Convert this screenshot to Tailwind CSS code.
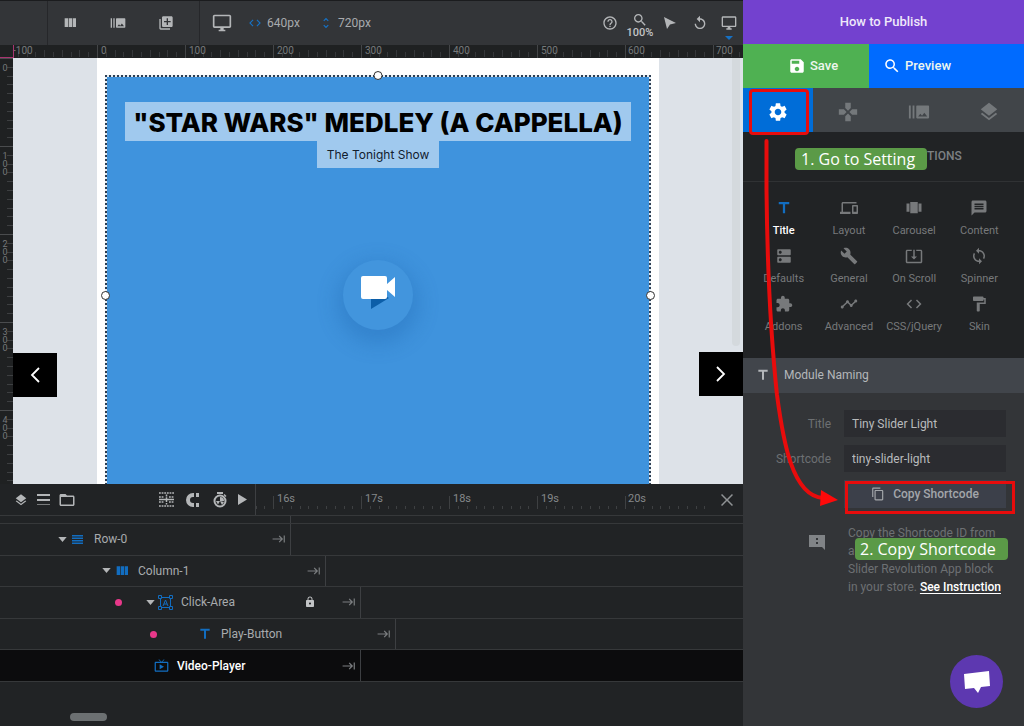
<!DOCTYPE html>
<html lang="en">
<head>
<meta charset="utf-8">
<title>Slider Editor</title>
<script src="https://cdn.jsdelivr.net/npm/@tailwindcss/browser@4"></script>
</head>
<body class="flex min-h-screen bg-[#212325] font-['Roboto',sans-serif] text-[#a8abae]">
<svg class="hidden" aria-hidden="true">
  <symbol id="burst" viewBox="0 0 24 24"><path d="M1 5h2v14H1zm4 0h2v14H5zm17 0H10c-.55 0-1 .45-1 1v12c0 .55.45 1 1 1h12c.55 0 1-.45 1-1V6c0-.55-.45-1-1-1zM11 17l2.500-3.150L15.290 16l2.500-3.220L21 17H11z"/></symbol>
  <symbol id="layers" viewBox="0 0 24 24"><path d="M11.990 18.540l-7.370-5.730L3 14.070l9 7 9-7-1.630-1.270-7.380 5.740zM12 16l7.360-5.730L21 9l-9-7-9 7 1.630 1.270L12 16z"/></symbol>
  <symbol id="search" viewBox="0 0 24 24"><path d="M15.500 14h-.79l-.28-.27C15.410 12.590 16 11.110 16 9.500 16 5.910 13.090 3 9.500 3S3 5.910 3 9.500 5.910 16 9.500 16c1.610 0 3.090-.59 4.230-1.570l.27.28v.79l5 4.990L20.490 19l-4.990-5zm-6 0C7.010 14 5 11.990 5 9.500S7.010 5 9.500 5 14 7.010 14 9.500 11.990 14 9.500 14z"/></symbol>
  <symbol id="title" viewBox="0 0 24 24"><path d="M5 4v3h5.500v12h3V7H19V4z"/></symbol>
  <symbol id="code" viewBox="0 0 24 24"><path d="M9.400 16.600L4.800 12l4.600-4.600L8 6l-6 6 6 6 1.400-1.400zm5.200 0l4.600-4.600-4.600-4.600L16 6l6 6-6 6-1.400-1.400z"/></symbol>
  <symbol id="desktop" viewBox="0 0 24 24"><path d="M21 2H3c-1.100 0-2 .9-2 2v12c0 1.100.9 2 2 2h7v2H8v2h8v-2h-2v-2h7c1.100 0 2-.9 2-2V4c0-1.100-.9-2-2-2zm0 14H3V4h18v12z"/></symbol>
  <symbol id="column" viewBox="0 0 24 24"><path d="M10 18h5V5h-5v13zm-6 0h5V5H4v13zM16 5v13h5V5h-5z"/></symbol>
  <symbol id="tab" viewBox="0 0 24 24"><path d="M11.590 7.410L15.170 11H1v2h14.170l-3.590 3.590L13 18l6-6-6-6-1.410 1.410zM20 6v12h2V6h-2z"/></symbol>
  <symbol id="caret" viewBox="0 0 10 6"><path d="M0 0h10L5 6z"/></symbol>
</svg>

<main class="flex min-w-0 flex-1 flex-col">
  <!-- top toolbar -->
  <header class="flex h-[45px] items-stretch border-t border-[#1b1c1e] bg-[#333538] fill-[#b4b6b8]">
    <div class="w-12 border-r border-[#26272a]"></div>
    <div class="flex w-[152px] items-center gap-6 border-r border-[#26272a] pl-[10px]">
      <button aria-label="Columns" class="grid w-6 place-items-center"><svg class="size-4"><use href="#column"/></svg></button>
      <button aria-label="Slides" class="grid w-6 place-items-center"><svg class="size-4"><use href="#burst"/></svg></button>
      <button aria-label="Add slide" class="grid w-6 place-items-center"><svg class="size-4" viewBox="0 0 24 24"><path d="M4 6H2v14c0 1.100.9 2 2 2h14v-2H4V6zm16-4H8c-1.100 0-2 .9-2 2v12c0 1.100.9 2 2 2h12c1.100 0 2-.9 2-2V4c0-1.100-.9-2-2-2zm-1 9h-4v4h-2v-4H9V9h4V5h2v4h4v2z"/></svg></button>
    </div>
    <div class="flex items-center pl-3 text-xs">
      <button aria-label="Device"><svg class="size-5"><use href="#desktop"/></svg></button>
      <svg class="ml-4 size-[14px] fill-[#1671c4]"><use href="#code"/></svg>
      <span class="ml-[5px] w-[52px]">640px</span>
      <svg class="size-[14px] fill-[#1671c4]" viewBox="0 0 24 24"><path d="M12 5.830L15.170 9l1.410-1.410L12 3 7.410 7.590 8.830 9 12 5.830zm0 12.340L8.830 15l-1.410 1.410L12 21l4.590-4.590L15.170 15 12 18.170z"/></svg>
      <span class="ml-[5px]">720px</span>
    </div>
    <div class="ml-auto flex items-center">
      <button aria-label="Help" class="grid w-[30px] place-items-center"><svg class="size-4" viewBox="0 0 24 24"><path d="M11 18h2v-2h-2v2zm1-16C6.480 2 2 6.480 2 12s4.480 10 10 10 10-4.480 10-10S17.520 2 12 2zm0 18c-4.410 0-8-3.590-8-8s3.590-8 8-8 8 3.590 8 8-3.590 8-8 8zm0-14c-2.210 0-4 1.790-4 4h2c0-1.100.9-2 2-2s2 .9 2 2c0 2-3 1.750-3 5h2c0-2.250 3-2.500 3-5 0-2.210-1.790-4-4-4z"/></svg></button>
      <button class="flex w-[30px] flex-col items-center pt-1 text-[11px] leading-[10px] font-medium text-[#c2c4c6]"><svg class="size-4"><use href="#search"/></svg>100%</button>
      <button aria-label="Select" class="grid w-[30px] place-items-center"><svg class="size-4" viewBox="0 0 16 16"><path d="M2 2l12 6-6 1.500L5 14z"/></svg></button>
      <button aria-label="Undo" class="grid w-[29px] place-items-center"><svg class="size-4" viewBox="0 0 24 24"><path d="M12 5V1L7 6l5 5V7c3.310 0 6 2.690 6 6s-2.690 6-6 6-6-2.690-6-6H4c0 4.420 3.580 8 8 8s8-3.580 8-8-3.580-8-8-8z"/></svg></button>
      <button aria-label="Desktop view" class="flex w-[29px] flex-col items-center gap-[5px] pt-[9px]"><svg class="size-4"><use href="#desktop"/></svg><svg class="h-1 w-2 fill-[#1671c4]" viewBox="0 0 8 4"><path d="M0 0h8L4 4z"/></svg></button>
    </div>
  </header>

  <!-- horizontal ruler -->
  <svg class="h-[13px] w-full bg-[#1f2122] text-[10px]">
    <defs><pattern id="hticks" x="9" width="88" height="13" patternUnits="userSpaceOnUse"><path d="M.5 0v13" stroke="#434547"/><path d="M9.500 7v5M18.500 5v7M26.500 7v5M35.500 5v7M44.500 7v5M53.500 5v7M62.500 7v5M70.500 5v7M79.500 7v5" stroke="#35373a"/></pattern></defs>
    <rect width="100%" height="13" fill="url(#hticks)"/>
    <path d="M0 0h13v13H0z" fill="#1f2122"/>
    <g fill="#76797b"><text x="13" y="9">-100</text><text x="101" y="9">0</text><text x="189" y="9">100</text><text x="277" y="9">200</text><text x="365" y="9">300</text><text x="453" y="9">400</text><text x="541" y="9">500</text><text x="628" y="9">600</text><text x="716" y="9">700</text></g>
    <path d="M13.500 0v13M0 12.500h13" stroke="#a83470"/>
  </svg>

  <div class="flex flex-1">
    <!-- vertical ruler -->
    <svg class="h-auto w-[13px] shrink-0 bg-[#1f2122] text-[9px]">
      <defs><pattern id="vticks" width="13" height="88" patternUnits="userSpaceOnUse"><path d="M0 .5h13" stroke="#4a4c4e"/><path d="M7 9.500h6M7 18.500h6M7 26.500h6M7 35.500h6M7 44.500h6M7 53.500h6M7 62.500h6M7 70.500h6M7 79.500h6" stroke="#3d3f41"/></pattern></defs>
      <rect width="13" height="100%" fill="url(#vticks)"/>
      <g fill="#76797b" text-anchor="middle"><text x="5" y="13">0</text>
      <text y="101"><tspan x="5">1</tspan><tspan x="5" dy="8">0</tspan><tspan x="5" dy="8">0</tspan></text>
      <text y="189"><tspan x="5">2</tspan><tspan x="5" dy="8">0</tspan><tspan x="5" dy="8">0</tspan></text>
      <text y="277"><tspan x="5">3</tspan><tspan x="5" dy="8">0</tspan><tspan x="5" dy="8">0</tspan></text>
      <text y="365"><tspan x="5">4</tspan><tspan x="5" dy="8">0</tspan><tspan x="5" dy="8">0</tspan></text></g>
    </svg>

    <!-- stage -->
    <div class="relative flex flex-1 justify-center bg-[#dde2e8] px-[84px]">
      <section class="flex flex-1 bg-white px-2 pt-[17px]">
        <div class="relative flex flex-1 flex-col items-center bg-[#3f93dd] pt-[27px]">
          <svg class="absolute inset-0 h-full w-full" fill="none" aria-hidden="true"><path d="M0 1h546M1 0v500M545 0v500" stroke="#e4ecf4" stroke-width="2"/><path d="M0 1h546M1 0v500M545 0v500" stroke="#2c3e52" stroke-width="2" stroke-dasharray="2 2"/></svg>
          <h1 class="bg-[#a0c9ee] px-2 pt-[3px] font-['Inter',sans-serif] text-[26px] leading-9 font-extrabold whitespace-nowrap text-black">"STAR WARS" MEDLEY (A CAPPELLA)</h1>
          <p class="bg-[#a0c9ee] px-[10px] pt-px font-['Inter',sans-serif] text-xs leading-[26px] text-[#12202e]">The Tonight Show</p>
          <div class="mt-[92px] grid size-[70px] place-items-center rounded-full bg-[#4295dd] shadow-[0_8px_20px_6px_rgba(25,95,170,0.3)]">
            <svg class="h-9 w-10 -translate-y-[2px]" viewBox="0 0 40 36"><path d="M13 13v21l18-11z" fill="#0c5ea8"/><path d="M5 1h22q2 0 2 2v6l8-7v20l-8-7v7q0 2-2 2H5q-2 0-2-2V3q0-2 2-2z" fill="#fff"/></svg>
          </div>
          <i class="absolute -top-1 left-1/2 size-[9px] -translate-x-1/2 rounded-full border border-[#333] bg-white"></i>
          <i class="absolute top-[216px] -left-1 size-[9px] rounded-full border border-[#333] bg-white"></i>
          <i class="absolute top-[216px] -right-1 size-[9px] rounded-full border border-[#333] bg-white"></i>
        </div>
      </section>
      <i class="absolute top-0 right-[3px] h-[288px] w-2 rounded-b bg-[#d4d9dd]"></i>
      <button aria-label="Previous" class="absolute top-[295px] left-0 grid size-11 place-items-center bg-black"><svg class="h-4 w-[10px]" viewBox="0 0 10 16" fill="none" stroke="#fff" stroke-width="1.800"><path d="M9 1L2 8l7 7"/></svg></button>
      <button aria-label="Next" class="absolute top-[294px] right-0 grid size-11 place-items-center bg-black"><svg class="h-4 w-[10px]" viewBox="0 0 10 16" fill="none" stroke="#fff" stroke-width="1.800"><path d="M1 1l7 7-7 7"/></svg></button>
    </div>
  </div>

  <!-- timeline -->
  <section class="flex h-[242px] flex-col bg-[#212325]">
    <div class="flex h-8 shrink-0 items-stretch border-b border-[#36383a]">
      <div class="flex w-64 items-center border-r border-[#3d3f42] fill-[#b4b6b8] pr-2 pl-[14px]">
        <button aria-label="Layers"><svg class="size-[14px]"><use href="#layers"/></svg></button>
        <button aria-label="List" class="ml-[9px]"><svg class="h-3 w-[13px]" viewBox="0 0 13 12"><path d="M0 0h13v2H0zM0 5h13v2H0z"/><path d="M0 10h13v1H0z" opacity=".6"/></svg></button>
        <button aria-label="Folder" class="ml-2"><svg class="size-[18px]" viewBox="0 0 24 24"><path d="M20 6h-8l-2-2H4c-1.100 0-1.990.9-1.990 2L2 18c0 1.100.9 2 2 2h16c1.100 0 2-.9 2-2V8c0-1.100-.9-2-2-2zm0 12H4V8h16v10z"/></svg></button>
        <button aria-label="Grid" class="ml-auto"><svg class="size-[15px]" viewBox="0 0 15 15" fill="none" stroke="#b4b6b8" stroke-width="1.500"><path d="M0 1h15M0 14h15" stroke-dasharray="1.800 .84"/><path d="M0 5h5M10 5h5M0 10h5M10 10h5" stroke-dasharray="1.800 .84"/><path d="M0 7.500h5M10 7.500h5M5 7.500h5"/><path d="M7.500 2.500v10" stroke-dasharray="2 .8"/></svg></button>
        <button aria-label="Magnet" class="ml-3"><svg class="size-[14px]" viewBox="0 0 14 14"><path d="M8 0H7a7 7 0 000 14h1v-4H7a3 3 0 010-6h1zM10 0h3v4h-3zM10 10h3v4h-3z"/></svg></button>
        <button aria-label="Timer" class="ml-3"><svg class="size-4" viewBox="0 0 16 16"><path d="M5 0h6v2H5zM12.500 2l2 2-1 1-2-2z"/><circle cx="8" cy="9" r="5.500" fill="none" stroke="#b4b6b8" stroke-width="2"/><path d="M8 9V5a4 4 0 014 4zM8 9H4l2 3.500zM8 9l4 1-2 3z"/></svg></button>
        <button aria-label="Play" class="ml-[10px]"><svg class="h-[11px] w-[9px]" viewBox="0 0 9 11"><path d="M0 0l9 5.500L0 11z"/></svg></button>
      </div>
      <svg class="h-[31px] min-w-0 flex-1 text-[11px]">
        <defs><pattern id="tticks" x="17" width="88" height="31" patternUnits="userSpaceOnUse"><path d="M.5 12v13M9.500 22v3M18.500 22v3M27.500 22v3M35.500 22v3M44.500 22v3M53.500 22v3M62.500 22v3M71.500 22v3M79.500 22v3" stroke="#3e4042"/></pattern></defs>
        <rect width="450" height="31" fill="url(#tticks)"/>
        <g fill="#85888a"><text x="21" y="18">16s</text><text x="109" y="18">17s</text><text x="197" y="18">18s</text><text x="285" y="18">19s</text><text x="372" y="18">20s</text></g>
      </svg>
      <button aria-label="Close timeline" class="pr-[7px]"><svg class="size-[18px] fill-[#8f9294]" viewBox="0 0 24 24"><path d="M20 5.400L18.600 4 12 10.600 5.400 4 4 5.400 10.600 12 4 18.600 5.400 20 12 13.400 18.600 20 20 18.600 13.400 12z"/></svg></button>
    </div>
    <div class="h-2 shrink-0 border-b border-[#36383a]"><div class="h-full w-[291px] border-r border-[#3d3f42]"></div></div>
    <div class="flex h-[158px] shrink-0 flex-col text-xs">
      <div class="flex flex-1 border-b border-[#36383a]"><div class="flex w-[291px] items-center border-r border-[#3d3f42] pr-1 pl-[58px]">
        <svg class="h-[5px] w-[9px] fill-[#b4b6b8]"><use href="#caret"/></svg>
        <svg class="ml-[5px] h-[9px] w-[11px] fill-[#126dc0]" viewBox="0 0 11 9"><path d="M0 0h11v1.500H0zM0 2.500h11V4H0zM0 5h11v1.500H0zM0 7.500h11V9H0z"/></svg>
        <span class="ml-[11px]">Row-0</span><svg class="ml-auto size-[14px] fill-[#7c7f81]"><use href="#tab"/></svg></div></div>
      <div class="flex flex-1 border-b border-[#36383a]"><div class="flex w-[326px] items-center border-r border-[#3d3f42] pr-1 pl-[102px]">
        <svg class="h-[5px] w-[9px] fill-[#b4b6b8]"><use href="#caret"/></svg>
        <svg class="ml-[3px] size-4 fill-[#126dc0]"><use href="#column"/></svg>
        <span class="ml-2">Column-1</span><svg class="ml-auto size-[14px] fill-[#7c7f81]"><use href="#tab"/></svg></div></div>
      <div class="flex flex-1 border-b border-[#36383a]"><div class="flex w-[361px] items-center border-r border-[#3d3f42] pr-1 pl-[115px]">
        <i class="size-[7px] rounded-full bg-[#e8388a]"></i>
        <svg class="ml-6 h-[5px] w-[9px] fill-[#b4b6b8]"><use href="#caret"/></svg>
        <svg class="ml-[3px] size-[15px]" viewBox="0 0 15 15" fill="none" stroke="#126dc0"><path d="M2.500 2.500h10v10h-10zM5 11l2.500-6L10 11M6 9h3"/><path d="M.5 .5h3v3h-3zM11.500 .5h3v3h-3zM.5 11.500h3v3h-3zM11.500 11.500h3v3h-3z" fill="#212325"/></svg>
        <span class="ml-2">Click-Area</span>
        <svg class="ml-auto size-3 fill-[#c2c4c6]" viewBox="0 0 24 24"><path d="M18 8h-1V6c0-2.760-2.240-5-5-5S7 3.240 7 6v2H6c-1.100 0-2 .9-2 2v10c0 1.100.9 2 2 2h12c1.100 0 2-.9 2-2V10c0-1.100-.9-2-2-2zm-6 9c-1.100 0-2-.9-2-2s.9-2 2-2 2 .9 2 2-.9 2-2 2zm3.100-9H8.900V6c0-1.710 1.390-3.100 3.100-3.100 1.710 0 3.100 1.390 3.100 3.100v2z"/></svg>
        <svg class="ml-[26px] size-[14px] fill-[#7c7f81]"><use href="#tab"/></svg></div></div>
      <div class="flex flex-1 border-b border-[#36383a]"><div class="flex w-[396px] items-center border-r border-[#3d3f42] pr-1 pl-[150px]">
        <i class="size-[7px] rounded-full bg-[#e8388a]"></i>
        <svg class="ml-10 size-4 fill-[#126dc0]"><use href="#title"/></svg>
        <span class="ml-2">Play-Button</span><svg class="ml-auto size-[14px] fill-[#7c7f81]"><use href="#tab"/></svg></div></div>
      <div class="flex flex-1 border-b border-[#36383a] bg-[#0c0c0d]"><div class="flex w-[361px] items-center border-r border-[#3d3f42] pr-1 pl-[154px]">
        <svg class="size-[15px] fill-[#126dc0]" viewBox="0 0 24 24"><path d="M21 6h-7.590l3.290-3.290L16 2l-4 4-4-4-.71.71L10.590 6H3c-1.100 0-2 .89-2 2v12c0 1.100.9 2 2 2h18c1.100 0 2-.9 2-2V8c0-1.110-.9-2-2-2zm0 14H3V8h18v12zM9 10v8l7-4z"/></svg>
        <span class="ml-2 font-medium text-white">Video-Player</span><svg class="ml-auto size-[14px] fill-[#7c7f81]"><use href="#tab"/></svg></div></div>
    </div>
    <div class="mt-auto mb-[5px] ml-[70px] h-2 w-[37px] rounded-full bg-[#6c7072]"></div>
  </section>
</main>

<!-- settings sidebar -->
<aside class="relative flex w-[281px] shrink-0 flex-col bg-[#333538]">
  <button class="h-11 bg-[#7341cf] text-[13px] font-medium text-[#eee8fa]">How to Publish</button>
  <div class="flex h-11 text-[13px] font-medium text-[#eef6ee]">
    <button class="flex w-[126px] items-center gap-1 bg-[#4fb152] pl-[45px]"><svg class="size-[18px] fill-white" viewBox="0 0 24 24"><path d="M17 3H5c-1.110 0-2 .9-2 2v14c0 1.100.89 2 2 2h14c1.100 0 2-.9 2-2V7l-4-4zm-5 16c-1.660 0-3-1.340-3-3s1.340-3 3-3 3 1.340 3 3-1.340 3-3 3zm3-10H5V5h10v4z"/></svg>Save</button>
    <button class="flex flex-1 items-center gap-1 bg-[#006bff] pl-[14px]"><svg class="size-[18px] fill-white"><use href="#search"/></svg>Preview</button>
  </div>
  <nav class="grid h-11 grid-cols-4 bg-[#414549] fill-[#74787b]">
    <button aria-label="Settings" class="grid place-items-center bg-[#006dd8] fill-white pt-1"><svg class="size-[22px]" viewBox="0 0 24 24"><path d="M19.140 12.940c.04-.3.06-.61.06-.94 0-.32-.02-.64-.07-.94l2.030-1.580c.18-.14.23-.41.12-.61l-1.920-3.320c-.12-.22-.37-.29-.59-.22l-2.390.96c-.5-.38-1.030-.7-1.620-.94l-.36-2.540c-.04-.24-.24-.41-.48-.41h-3.840c-.24 0-.43.17-.47.41l-.36 2.540c-.59.24-1.130.57-1.620.94l-2.390-.96c-.22-.08-.47 0-.59.22L2.740 8.870c-.12.21-.08.47.12.61l2.030 1.580c-.05.3-.09.63-.09.94s.02.64.07.94l-2.030 1.580c-.18.14-.23.41-.12.61l1.920 3.320c.12.22.37.29.59.22l2.390-.96c.5.38 1.030.7 1.620.94l.36 2.540c.05.24.24.41.48.41h3.840c.24 0 .44-.17.47-.41l.36-2.540c.59-.24 1.130-.56 1.620-.94l2.390.96c.22.08.47 0 .59-.22l1.920-3.320c.12-.22.07-.47-.12-.61l-2.010-1.580zM12 15.600c-1.980 0-3.600-1.620-3.600-3.600s1.620-3.600 3.600-3.600 3.600 1.620 3.600 3.600-1.620 3.600-3.600 3.600z"/></svg></button>
    <button aria-label="Navigation" class="grid place-items-center pt-1"><svg class="size-[22px]" viewBox="0 0 24 24"><path d="M15 7.500V2H9v5.500l3 3 3-3zM7.500 9H2v6h5.500l3-3-3-3zM9 16.500V22h6v-5.500l-3-3-3 3zM16.500 9l-3 3 3 3H22V9h-5.500z"/></svg></button>
    <button aria-label="Slides" class="grid place-items-center pt-1"><svg class="size-[22px]"><use href="#burst"/></svg></button>
    <button aria-label="Layers" class="grid place-items-center pt-1"><svg class="size-[22px]"><use href="#layers"/></svg></button>
  </nav>
  <h2 class="h-[50px] border-b border-[#303234] bg-[#212325] text-center text-xs leading-[48px] font-medium text-[#7d8083]">MODULE GENERAL OPTIONS</h2>
  <div class="grid h-44 auto-rows-max grid-cols-4 bg-[#212325] fill-[#77797b] pt-[17px] pr-3 pl-2 text-[11px] leading-4 text-[#77797b]">
    <button class="flex h-12 flex-col items-center gap-[6px] fill-[#126dc0] font-medium text-white"><svg class="size-[18px]"><use href="#title"/></svg>Title</button>
    <button class="flex h-12 flex-col items-center gap-[6px]"><svg class="size-[18px]" viewBox="0 0 24 24"><path d="M4 6h18V4H4c-1.100 0-2 .9-2 2v11H0v3h14v-3H4V6zm19 2h-6c-.55 0-1 .45-1 1v10c0 .55.45 1 1 1h6c.55 0 1-.45 1-1V9c0-.55-.45-1-1-1zm-1 9h-4v-7h4v7z"/></svg>Layout</button>
    <button class="flex h-12 flex-col items-center gap-[6px]"><svg class="size-[18px]" viewBox="0 0 24 24"><path d="M7 19h10V4H7v15zM2 17h4V6H2v11zM18 6v11h4V6h-4z"/></svg>Carousel</button>
    <button class="flex h-12 flex-col items-center gap-[6px]"><svg class="size-[18px]" viewBox="0 0 24 24"><path d="M20 2H4c-1.100 0-1.990.9-1.990 2L2 22l4-4h14c1.100 0 2-.9 2-2V4c0-1.100-.9-2-2-2zm-2 12H6v-2h12v2zm0-3H6V9h12v2zm0-3H6V6h12v2z"/></svg>Content</button>
    <button class="flex h-12 flex-col items-center gap-[6px]"><svg class="size-[18px]" viewBox="0 0 24 24"><path d="M20 13H4c-.55 0-1 .45-1 1v6c0 .55.45 1 1 1h16c.55 0 1-.45 1-1v-6c0-.55-.45-1-1-1zM7 19c-1.100 0-2-.9-2-2s.9-2 2-2 2 .9 2 2-.9 2-2 2zM20 3H4c-.55 0-1 .45-1 1v6c0 .55.45 1 1 1h16c.55 0 1-.45 1-1V4c0-.55-.45-1-1-1zM7 9c-1.100 0-2-.9-2-2s.9-2 2-2 2 .9 2 2-.9 2-2 2z"/></svg>Defaults</button>
    <button class="flex h-12 flex-col items-center gap-[6px]"><svg class="size-[18px]" viewBox="0 0 24 24"><path d="M22.700 19l-9.100-9.100c.9-2.300.4-5-1.500-6.900-2-2-5-2.400-7.400-1.300L9 6 6 9 1.600 4.700C.4 7.100.9 10.100 2.900 12.100c1.900 1.900 4.600 2.400 6.900 1.500l9.100 9.100c.4.4 1 .4 1.400 0l2.300-2.300c.5-.4.5-1.100.1-1.400z"/></svg>General</button>
    <button class="flex h-12 flex-col items-center gap-[6px]"><svg class="size-[18px]" viewBox="0 0 24 24"><path d="M12 16.500l4-4h-3v-9h-2v9H8l4 4zm9-13h-6v1.990h6v14.030H3V5.490h6V3.500H3c-1.100 0-2 .9-2 2v14c0 1.100.9 2 2 2h18c1.100 0 2-.9 2-2v-14c0-1.100-.9-2-2-2z"/></svg>On Scroll</button>
    <button class="flex h-12 flex-col items-center gap-[6px]"><svg class="size-[18px]" viewBox="0 0 24 24"><path d="M12 4V1L8 5l4 4V6c3.310 0 6 2.690 6 6 0 1.010-.25 1.970-.7 2.800l1.460 1.460C19.540 15.030 20 13.570 20 12c0-4.420-3.580-8-8-8zm0 14c-3.310 0-6-2.690-6-6 0-1.010.25-1.970.7-2.800L5.240 7.740C4.460 8.970 4 10.430 4 12c0 4.420 3.580 8 8 8v3l4-4-4-4v3z"/></svg>Spinner</button>
    <button class="flex h-12 flex-col items-center gap-[6px]"><svg class="size-[18px]" viewBox="0 0 24 24"><path d="M20.500 11H19V7c0-1.100-.9-2-2-2h-4V3.500C13 2.120 11.880 1 10.500 1S8 2.120 8 3.500V5H4c-1.100 0-1.990.9-1.990 2v3.800H3.500c1.490 0 2.700 1.210 2.700 2.700s-1.210 2.700-2.700 2.700H2V20c0 1.100.9 2 2 2h3.800v-1.500c0-1.490 1.210-2.700 2.700-2.700 1.490 0 2.700 1.210 2.700 2.700V22H17c1.100 0 2-.9 2-2v-4h1.500c1.380 0 2.500-1.120 2.500-2.500S21.880 11 20.500 11z"/></svg>Addons</button>
    <button class="flex h-12 flex-col items-center gap-[6px]"><svg class="size-[18px]" viewBox="0 0 24 24"><path d="M23 8c0 1.100-.9 2-2 2-.18 0-.35-.02-.51-.07l-3.560 3.550c.05.16.07.34.07.52 0 1.100-.9 2-2 2s-2-.9-2-2c0-.18.02-.36.07-.52l-2.550-2.550c-.16.05-.34.07-.52.07s-.36-.02-.52-.07l-4.550 4.560c.05.16.07.33.07.51 0 1.100-.9 2-2 2s-2-.9-2-2 .9-2 2-2c.18 0 .35.02.51.07l4.560-4.550C8.020 9.360 8 9.180 8 9c0-1.100.9-2 2-2s2 .9 2 2c0 .18-.02.36-.07.52l2.550 2.550c.16-.05.34-.07.52-.07s.36.02.52.07l3.550-3.560C19.020 8.350 19 8.180 19 8c0-1.100.9-2 2-2s2 .9 2 2z"/></svg>Advanced</button>
    <button class="flex h-12 flex-col items-center gap-[6px]"><svg class="size-[18px]"><use href="#code"/></svg>CSS/jQuery</button>
    <button class="flex h-12 flex-col items-center gap-[6px]"><svg class="size-[18px]" viewBox="0 0 24 24"><path d="M18 4V3c0-.55-.45-1-1-1H5c-.55 0-1 .45-1 1v4c0 .55.45 1 1 1h12c.55 0 1-.45 1-1V6h1v4H9v11c0 .55.45 1 1 1h2c.55 0 1-.45 1-1v-9h8V4h-3z"/></svg>Skin</button>
  </div>
  <h3 class="flex h-[35px] items-center gap-[13px] bg-[#41454b] pb-[2px] pl-3 text-xs text-[#b4b7ba]"><svg class="size-4 fill-[#b4b7ba]"><use href="#title"/></svg>Module Naming</h3>
  <div class="grid grid-cols-[88px_1fr] items-center gap-x-[13px] gap-y-2 pt-[17px] pr-[18px] text-xs">
    <label for="mod-title" class="text-right text-[#6d7073]">Title</label>
    <input id="mod-title" value="Tiny Slider Light" class="h-[27px] w-full min-w-0 bg-[#2b2c30] px-2 text-[#b9bbbd]">
    <label for="mod-code" class="text-right text-[#6d7073]">Shortcode</label>
    <input id="mod-code" value="tiny-slider-light" class="h-[27px] w-full min-w-0 bg-[#2b2c30] px-2 text-[#b9bbbd]">
    <button class="col-start-2 flex h-7 items-center justify-center gap-2 bg-[#3c404a] font-medium text-[#a3a6aa]"><svg class="size-[14px] fill-[#a3a6aa]" viewBox="0 0 24 24"><path d="M16 1H4c-1.100 0-2 .9-2 2v14h2V3h12V1zm3 4H8c-1.100 0-2 .9-2 2v14c0 1.100.9 2 2 2h11c1.100 0 2-.9 2-2V7c0-1.100-.9-2-2-2zm0 16H8V7h11v14z"/></svg>Copy Shortcode</button>
  </div>
  <div class="flex gap-[23px] pt-4 pl-[66px]">
    <svg class="mt-[10px] size-4 shrink-0 fill-[#808386]" viewBox="0 0 16 16"><path d="M0 1h16v15l-3-3H0zM7 4v2h2V4zM7 8v2h2V8z" fill-rule="evenodd"/></svg>
    <p class="text-xs leading-[18px] whitespace-nowrap text-[#6d7073]">Copy the Shortcode ID from<br>and paste it into the<br>Slider Revolution App block<br>in your store. <a href="#" class="font-medium text-white underline underline-offset-2">See Instruction</a></p>
  </div>

  <!-- tutorial annotations -->
  <div class="absolute top-[89px] left-[6px] h-[46px] w-[60px] rounded-sm border-[3px] border-[#e80c0c]"></div>
  <svg class="pointer-events-none absolute top-0 left-0 h-[520px] w-[281px]" viewBox="0 0 281 520" fill="none"><path d="M23.500 141V190C24 240 25 310 34 395C40 440 49 496 80 498" stroke="#e80c0c" stroke-width="4" stroke-linecap="round"/><path d="M78 490l17 10-18 6z" fill="#ff0a0a"/></svg>
  <div class="absolute top-[148px] left-[52px] h-[22px] w-[132px] rounded bg-[#5b9a47] px-[6px] font-['Open_Sans',sans-serif] text-base leading-[22px] whitespace-nowrap text-white">1. Go to Setting</div>
  <div class="absolute top-[481px] left-[102px] h-[33px] w-[170px] border-[3px] border-[#e80c0c]"></div>
  <div class="absolute top-[538px] left-[112px] h-[22px] w-[153px] rounded bg-[#5b9a47] px-[5px] font-['Open_Sans',sans-serif] text-base leading-[22px] whitespace-nowrap text-white">2. Copy Shortcode</div>

  <button aria-label="Chat" class="absolute right-[21px] bottom-[18px] grid size-[53px] place-items-center rounded-full bg-[#5d38b0]"><svg class="h-[22px] w-[26px]" viewBox="0 0 26 22"><path d="M0 3l25-3 1 15-9 1-3 6-4-5-9 1z" fill="#fff"/></svg></button>
</aside>
</body>
</html>
